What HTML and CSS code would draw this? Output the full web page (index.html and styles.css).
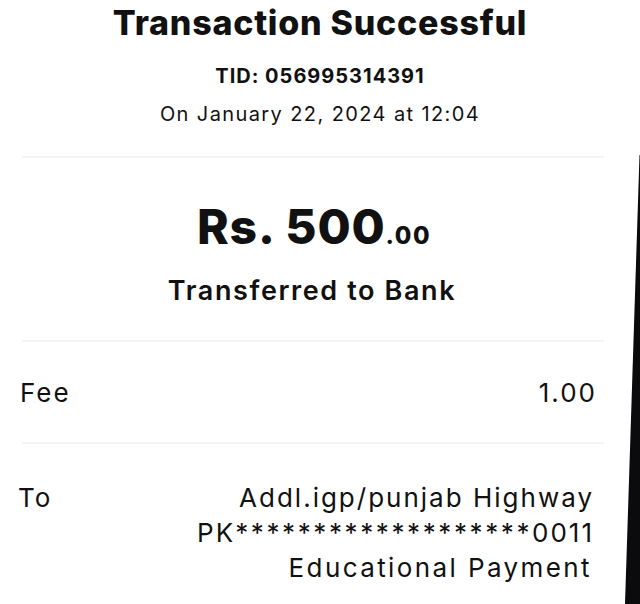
FILE: index.html
```html
<!DOCTYPE html>
<html lang="en">
<head>
<meta charset="utf-8">
<title>Transaction Successful</title>
<link rel="stylesheet" href="styles.css">
</head>
<body>
<main class="receipt">
  <header class="head">
    <h1 class="title">Transaction Successful</h1>
    <p class="tid">TID: 056995314391</p>
    <p class="date">On January 22, 2024 at 12:04</p>
  </header>
  <hr class="rule">
  <section class="amount-block">
    <p class="amount"><span class="amt-main">Rs. 500</span><span class="amt-dec">.00</span></p>
    <p class="kind">Transferred to Bank</p>
  </section>
  <hr class="rule">
  <div class="row row-fee">
    <span class="label">Fee</span>
    <span class="value">1.00</span>
  </div>
  <hr class="rule">
  <div class="row row-to">
    <span class="label">To</span>
    <div class="value stack">
      <span>Addl.igp/punjab Highway</span>
      <span>PK<span class="stars">*******************</span>0011</span>
      <span class="purpose">Educational Payment</span>
    </div>
  </div>
</main>
<svg class="edge" width="20" height="604" viewBox="0 0 20 604" aria-hidden="true">
  <polygon points="20,155 19.5,155 5,604 20,604" fill="#0b0b0d"/>
</svg>
</body>
</html>
```

FILE: styles.css
```css
html, body {
  margin: 0;
  padding: 0;
  background: #ffffff;
}
body {
  width: 640px;
  height: 604px;
  overflow: hidden;
  position: relative;
  font-family: "Inter", "Liberation Sans", sans-serif;
  color: #111111;
}
.receipt {
  display: flex;
  flex-direction: column;
}
.head {
  display: flex;
  flex-direction: column;
  align-items: center;
}
.title {
  margin: 1px 0 0;
  font-size: 34px;
  font-weight: 800;
  line-height: 44px;
  letter-spacing: 0.75px;
}
.tid {
  margin: 18px 0 0;
  font-size: 20px;
  font-weight: 700;
  line-height: 26px;
  letter-spacing: 1px;
}
.date {
  margin: 12px 0 0;
  font-size: 20px;
  font-weight: 400;
  line-height: 26px;
  letter-spacing: 1.4px;
}
.rule {
  margin: 0 36px 0 22px;
  border: 0;
  height: 2px;
  background: #f4f4f4;
}
.head + .rule {
  margin-top: 29px;
}
.amount-block {
  display: flex;
  flex-direction: column;
  align-items: center;
  padding: 40px 0 0;
  height: 142px;
}
.amount {
  margin: 0 12px 0 0;
  font-weight: 800;
  line-height: 58px;
}
.amt-main {
  font-size: 48px;
  letter-spacing: 0.9px;
}
.amt-dec {
  font-size: 24px;
  letter-spacing: 1.5px;
}
.kind {
  margin: 6px 16px 0 0;
  font-size: 27px;
  font-weight: 600;
  line-height: 36px;
  letter-spacing: 1.6px;
}
.row {
  display: flex;
  justify-content: space-between;
  align-items: flex-start;
  padding: 0 43px 0 20px;
  font-size: 26px;
  font-weight: 400;
  line-height: 35px;
  letter-spacing: 2px;
}
.row-fee {
  height: 100px;
  align-items: center;
}
.row-to {
  padding-top: 36px;
  padding-left: 18px;
  padding-right: 46px;
}
.stack {
  display: flex;
  flex-direction: column;
  align-items: flex-end;
}
.stars {
  letter-spacing: 2.6px;
}
.purpose {
  letter-spacing: 2.4px;
  margin-right: 2px;
}
.edge {
  position: absolute;
  right: 0;
  top: 0;
}
```
